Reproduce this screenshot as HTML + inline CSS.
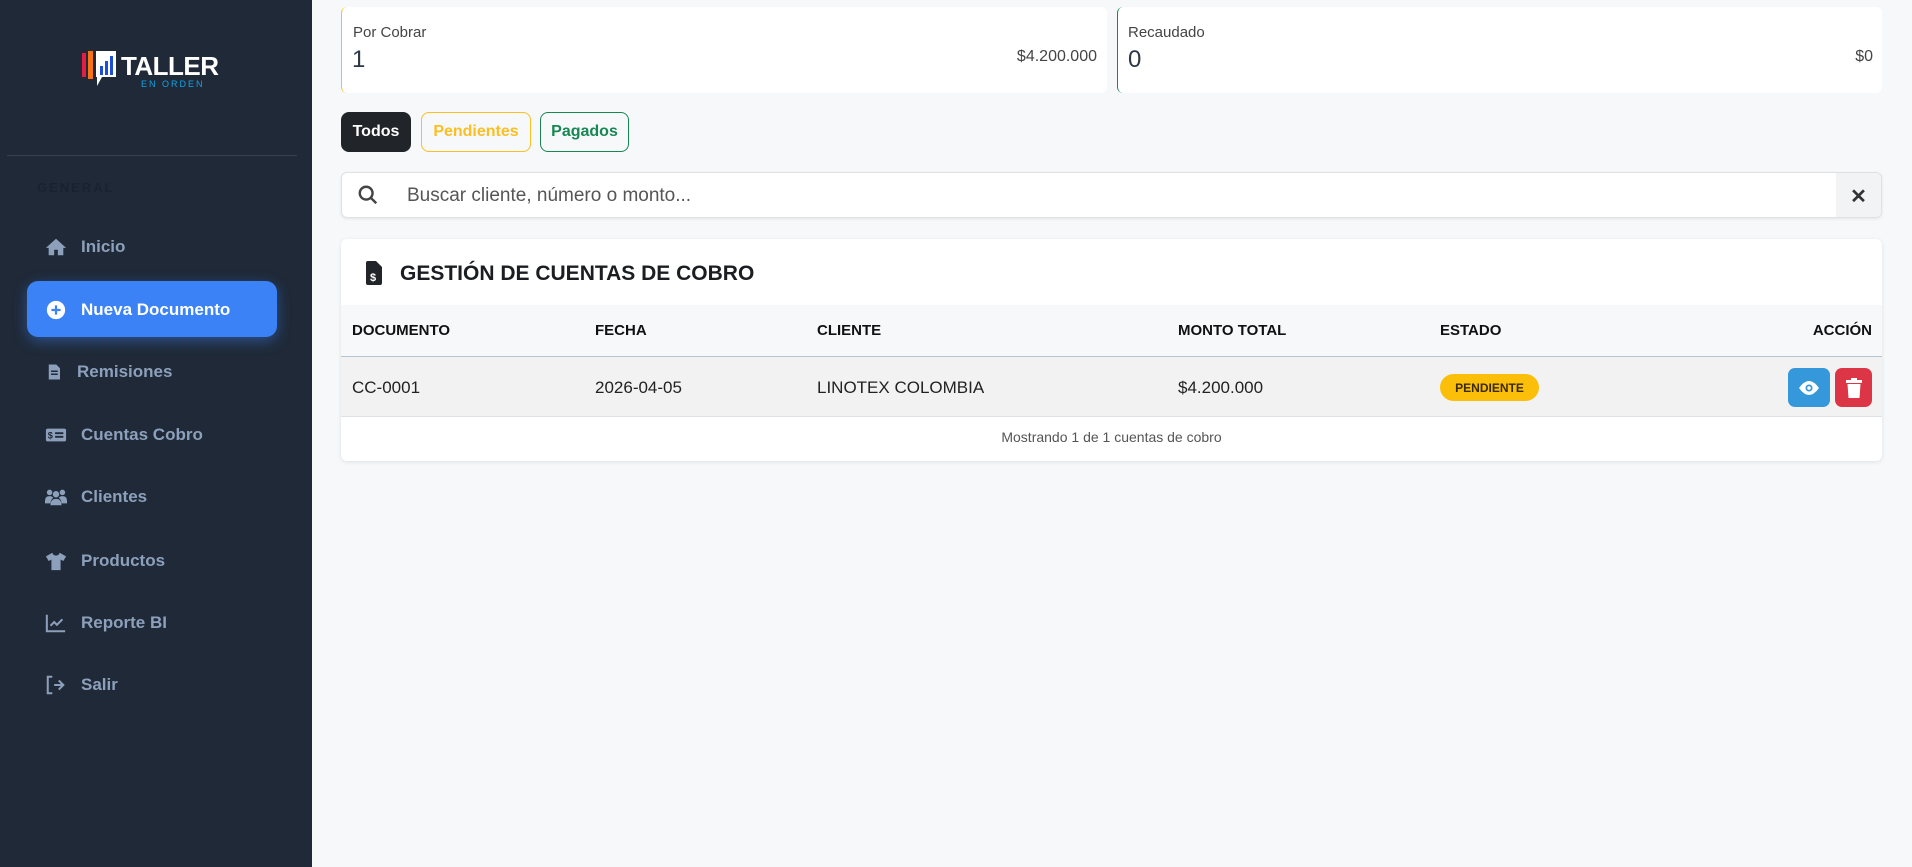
<!DOCTYPE html>
<html><head><meta charset="utf-8"><style>
*{box-sizing:border-box;margin:0;padding:0}
body{width:1912px;height:867px;background:#f7f8fa;font-family:"Liberation Sans",sans-serif;position:relative;overflow:hidden;color:#212529}
.sb{position:absolute;left:0;top:0;width:312px;height:867px;background:#1f2937}
.abs{position:absolute}
.mi{position:absolute;left:45px;font-size:17px;font-weight:bold;color:#8da0bb;display:flex;align-items:center;height:30px}
.mi svg{width:22px;height:22px;margin-right:14px;fill:#8da0bb}
.card{position:absolute;background:#fff;border-radius:6px}
.btn{position:absolute;top:112px;height:40px;border-radius:8px;font-size:16px;font-weight:bold;display:flex;align-items:center;justify-content:center}
.th{position:absolute;top:322px;font-size:15px;font-weight:bold;color:#111}
.td{position:absolute;top:378px;font-size:17px;color:#222}
</style></head><body>
<div class="sb">
  <svg class="abs" style="left:80px;top:48px" width="145" height="42" viewBox="0 0 145 42">
    <rect x="2" y="5" width="4" height="24" fill="#e11d48"/>
    <rect x="8" y="3" width="5" height="28" fill="#f97316"/>
    <path d="M16 3 L36 3 L36 29 L22 29 L17 38 L17 29 L16 29 Z" fill="#fff"/>
    <rect x="20" y="18" width="3" height="9" fill="#1d4ed8"/>
    <rect x="25" y="13" width="3" height="14" fill="#1d4ed8"/>
    <rect x="30" y="8" width="3" height="19" fill="#1d4ed8"/>
    <text x="41" y="27" font-family="Liberation Sans" font-weight="bold" font-size="26" fill="#fff" textLength="98">TALLER</text>
    <text x="61" y="39" font-family="Liberation Sans" font-size="9" letter-spacing="2" fill="#0ea5e9">EN ORDEN</text>
  </svg>
  <div class="abs" style="left:7px;top:155px;width:290px;height:1px;background:#334155"></div>
  <div class="abs" style="left:37px;top:180px;font-size:13px;font-weight:bold;letter-spacing:2px;color:#1a2230">GENERAL</div>
  <div class="mi" style="top:232px"><svg viewBox="0 0 24 24"><path d="M12 3L1 13h3v8h6v-6h4v6h6v-8h3z"/></svg>Inicio</div>
  <div class="abs" style="left:27px;top:281px;width:250px;height:56px;background:#3b82f6;border-radius:11px;box-shadow:0 4px 14px rgba(59,130,246,.45)"></div>
  <div class="mi" style="top:295px;color:#fff"><svg viewBox="0 0 24 24" style="fill:#fff"><circle cx="12" cy="12" r="10"/><path d="M12 7v10M7 12h10" stroke="#3b82f6" stroke-width="2.4"/></svg>Nueva Documento</div>
  <div class="mi" style="top:357px"><svg viewBox="0 0 24 24" style="width:18px"><path d="M5 2h10l5 5v15H5z"/><path d="M8 11h9M8 15h9" stroke="#1f2937" stroke-width="2"/></svg>Remisiones</div>
  <div class="mi" style="top:420px"><svg viewBox="0 0 24 24"><rect x="1" y="5" width="22" height="14" rx="2"/><text x="3" y="16" font-size="10" fill="#1f2937" font-weight="bold">$</text><path d="M11 10h9M11 14h9" stroke="#1f2937" stroke-width="2"/></svg>Cuentas Cobro</div>
  <div class="mi" style="top:482px"><svg viewBox="0 0 24 24"><circle cx="5" cy="7" r="3"/><circle cx="19" cy="7" r="3"/><circle cx="12" cy="9" r="3.5"/><path d="M0 16q0-5 5-5 3 0 4 2-3 2-3 6H0zM24 16q0-5-5-5-3 0-4 2 3 2 3 6h6zM6 21q0-7 6-7t6 7z"/></svg>Clientes</div>
  <div class="mi" style="top:546px"><svg viewBox="0 0 24 24"><path d="M8 3l-7 4 3 5 3-1.5V22h10V10.5l3 1.5 3-5-7-4q-1 3-4 3t-4-3z"/></svg>Productos</div>
  <div class="mi" style="top:608px"><svg viewBox="0 0 24 24" style="fill:none;stroke:#8da0bb;stroke-width:2.2"><path d="M2 3v18h20M6 15l4-4 3 3 6-6"/></svg>Reporte BI</div>
  <div class="mi" style="top:670px"><svg viewBox="0 0 24 24" style="fill:none;stroke:#8da0bb;stroke-width:2.2"><path d="M8 3H3v18h5"/><path d="M10 12h10M15 7l5 5-5 5" /></svg>Salir</div>
</div>

<div class="card" style="left:341px;top:7px;width:766px;height:86px;border-left:1px solid #fbbf24"></div>
<div class="abs" style="left:353px;top:24px;font-size:15px;color:#444">Por Cobrar</div>
<div class="abs" style="left:352px;top:46px;font-size:24px;color:#2d3748">1</div>
<div class="abs" style="left:900px;top:48px;width:197px;text-align:right;font-size:16px;color:#444">$4.200.000</div>
<div class="card" style="left:1117px;top:7px;width:765px;height:86px;border-left:1px solid #198754"></div>
<div class="abs" style="left:1128px;top:24px;font-size:15px;color:#444">Recaudado</div>
<div class="abs" style="left:1128px;top:46px;font-size:24px;color:#2d3748">0</div>
<div class="abs" style="left:1700px;top:48px;width:173px;text-align:right;font-size:16px;color:#444">$0</div>

<div class="btn" style="left:341px;width:70px;background:#212529;color:#fff">Todos</div>
<div class="btn" style="left:421px;width:110px;border:1px solid #fbbf24;color:#fbbf24">Pendientes</div>
<div class="btn" style="left:540px;width:89px;border:1px solid #198754;color:#198754">Pagados</div>

<div class="card" style="left:341px;top:172px;width:1541px;height:46px;border:1px solid #dee2e6;box-shadow:0 1px 3px rgba(0,0,0,.08);overflow:hidden">
  <svg class="abs" style="left:15px;top:11px" width="22" height="22" viewBox="0 0 24 24" fill="none" stroke="#444" stroke-width="2.6"><circle cx="10" cy="10" r="7"/><path d="M15 15l6 6"/></svg>
  <div class="abs" style="left:65px;top:12px;font-size:19px;color:#555">Buscar cliente, número o monto...</div>
  <div class="abs" style="right:0;top:0;width:45px;height:46px;background:#f1f3f5;display:flex;align-items:center;justify-content:center;font-size:20px;font-weight:bold;color:#333">✕</div>
</div>

<div class="card" style="left:341px;top:239px;width:1541px;height:222px;box-shadow:0 1px 4px rgba(0,0,0,.1);overflow:hidden">
  <svg class="abs" style="left:25px;top:22px" width="16" height="24" viewBox="0 0 16 24"><path d="M0 2q0-2 2-2h8l6 6v16q0 2-2 2H2q-2 0-2-2z" fill="#212529"/><text x="4" y="20" font-size="11" font-weight="bold" fill="#fff" font-family="Liberation Sans">$</text></svg>
  <div class="abs" style="left:59px;top:23px;font-size:21px;font-weight:bold;color:#1a1d21">GESTIÓN DE CUENTAS DE COBRO</div>
  <div class="abs" style="left:0;top:66px;width:1541px;height:52px;background:#f7f8fa;border-bottom:1px solid #b6c4d6"></div>
  <div class="abs" style="left:0;top:118px;width:1541px;height:60px;background:#f2f2f2;border-bottom:1px solid #dee2e6"></div>
  <div class="abs" style="left:0;top:190px;width:1541px;text-align:center;font-size:14px;color:#555">Mostrando 1 de 1 cuentas de cobro</div>
</div>
<div class="th" style="left:352px">DOCUMENTO</div>
<div class="th" style="left:595px">FECHA</div>
<div class="th" style="left:817px">CLIENTE</div>
<div class="th" style="left:1178px">MONTO TOTAL</div>
<div class="th" style="left:1440px">ESTADO</div>
<div class="th" style="left:1772px;width:100px;text-align:right">ACCIÓN</div>
<div class="td" style="left:352px">CC-0001</div>
<div class="td" style="left:595px">2026-04-05</div>
<div class="td" style="left:817px">LINOTEX COLOMBIA</div>
<div class="td" style="left:1178px">$4.200.000</div>
<div class="abs" style="left:1440px;top:374px;width:99px;height:27px;background:#fbbf0a;border-radius:14px;font-size:12px;font-weight:bold;color:#3a2a00;display:flex;align-items:center;justify-content:center">PENDIENTE</div>
<div class="abs" style="left:1788px;top:368px;width:42px;height:39px;background:#3498db;border-radius:7px;display:flex;align-items:center;justify-content:center"><svg width="22" height="16" viewBox="0 0 22 16"><path d="M1 8q10-14 20 0-10 14-20 0z" fill="#fff"/><circle cx="11" cy="8" r="3.5" fill="#3498db"/><circle cx="11" cy="8" r="1.8" fill="#fff"/></svg></div>
<div class="abs" style="left:1835px;top:368px;width:37px;height:39px;background:#dc3545;border-radius:7px;display:flex;align-items:center;justify-content:center"><svg width="16" height="20" viewBox="0 0 16 20"><rect x="0" y="2" width="16" height="3" fill="#fff"/><rect x="5" y="0" width="6" height="3" fill="#fff"/><path d="M1.5 6h13l-1 14h-11z" fill="#fff"/></svg></div>
</body></html>
